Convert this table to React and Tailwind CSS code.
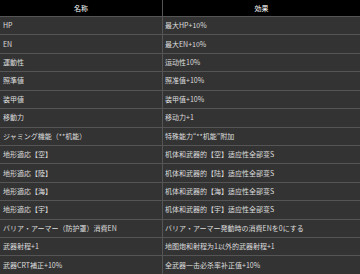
import React from 'react';

const rows = [
  ['HP', '最大HP+10%'],
  ['EN', '最大EN+10%'],
  ['運動性', '运动性10%'],
  ['照準値', '照准值+10%'],
  ['装甲値', '装甲值+10%'],
  ['移動力', '移动力+1'],
  ['ジャミング機能（**机能）', '特殊能力“**机能”附加'],
  ['地形適応【空】', '机体和武器的【空】适应性全部变S'],
  ['地形適応【陸】', '机体和武器的【陆】适应性全部变S'],
  ['地形適応【海】', '机体和武器的【海】适应性全部变S'],
  ['地形適応【宇】', '机体和武器的【宇】适应性全部变S'],
  ['バリア・アーマー（防护罩）消費EN', 'バリア・アーマー発動時の消費ENを0にする'],
  ['武器射程+1', '地图炮和射程为1以外的武器射程+1'],
  ['武器CRT補正+10%', '全武器一击必杀率补正值+10%'],
];

const App = () => {
  return (
    <div className="w-[360px] h-[274px] overflow-hidden bg-[#333333] font-['Noto_Sans_CJK_JP','Noto_Sans_CJK_SC',sans-serif] text-[7px] leading-none text-[#dddddd]">
      <div className="grid grid-cols-[162px_1fr] h-[16px] bg-black text-white">
        <div className="flex items-center justify-center">名称</div>
        <div className="flex items-center justify-center border-l border-[#555555]">効果</div>
      </div>
      {rows.map(([name, effect]) => (
        <div key={name} className="grid grid-cols-[162px_1fr] h-[18.43px] border-t border-[#555555]">
          <div className="flex items-center pl-[3px] whitespace-nowrap">{name}</div>
          <div className="flex items-center pl-[2px] border-l border-[#555555] whitespace-nowrap">{effect}</div>
        </div>
      ))}
    </div>
  );
};

export default App;
